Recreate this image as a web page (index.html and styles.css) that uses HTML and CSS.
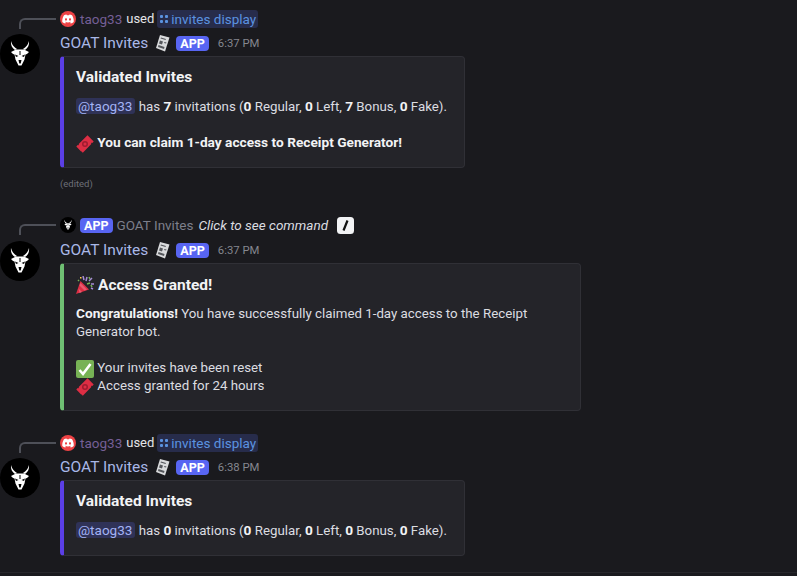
FILE: index.html
```html
<!DOCTYPE html>
<html>
	<head>
		<meta charset="UTF-8">
		<title>GOAT Invites</title>
		<link rel="stylesheet" href="styles.css">
	</head>
	<body>
		<svg class="defs" width="0" height="0">
			<symbol id="goat" viewBox="0 0 40 40">
				<circle cx="20" cy="20" r="20" fill="#000"/>
				<path d="M11 7c-.5 4 1 7 4 9l2-1c-3-2-5-4-6-8zM29 7c.5 4-1 7-4 9l-2-1c3-2 5-4 6-8z" fill="#fff"/>
				<path d="M11 18l5-2.500h8l5 2.500-2 2-1.500.5-1 5-1.500 3-1.500 3h-3l-1.500-3-1.500-3-1-5-1.500-.5z" fill="#fff"/>
				<path d="M15 20.500l3.500 1.500-2.500 1zM25 20.500l-3.500 1.500 2.500 1zM18.500 26h3l-.8 3.500h-1.400zM19.500 17h1v4h-1z" fill="#000"/>
			</symbol>
			<symbol id="receipt" viewBox="0 0 15 18">
				<path d="M5 1l9.500 2.500-4.500 14-9-3.500z" fill="#d9dadc"/>
				<path d="M6 3.500l5 1.500-.5 1-5-1.500zM5 6.500l3 1-1 3-3-1zM9.500 8l2 .5-.5 1-2-.5zM3.500 11l6 2-.5 2-6-2z" fill="#55575c"/>
			</symbol>
			<symbol id="ticket" viewBox="0 0 18 18">
				<path d="M11.500 .3l6.200 6.200-1.400 1.400-1.200-.2.200 1.200-8.500 8.800-1.500-1.500-.2.200L.3 11.500l1.400-1.400 1.200.2-.2-1.200z" fill="#dd2e44"/>
				<circle cx="9" cy="9" r="3" fill="#a01c30"/>
				<circle cx="9" cy="9" r="1.500" fill="#dd2e44"/>
			</symbol>
		</svg>

		<div class="msg msg-first">
			<div class="spine"></div>
			<div class="reply">
				<span class="badge-red">
					<svg width="12" height="10" viewBox="0 0 24 18"><path d="M20 1.500A20 20 0 0 0 15 0l-.7 1.400a18 18 0 0 0-4.600 0L9 0a20 20 0 0 0-5 1.500C1 6 .2 10.500.6 15a20 20 0 0 0 6 3l1.300-2-2-1 .5-.4a14 14 0 0 0 11.200 0l.5.400-2 1 1.300 2a20 20 0 0 0 6-3c.5-5.200-.8-9.600-3.400-13.500zM8 12.300c-1.200 0-2.100-1.100-2.100-2.400S6.800 7.500 8 7.500s2.200 1.100 2.100 2.400c0 1.300-.9 2.400-2.100 2.400zm8 0c-1.200 0-2.100-1.100-2.100-2.400s.9-2.400 2.100-2.400 2.200 1.100 2.100 2.400c0 1.300-.9 2.400-2.100 2.400z" fill="#fff"/></svg>
				</span>
				<span class="user">taog33</span>
				<span class="used">used</span>
				<span class="cmd"><span class="dots"><i></i><i></i><i></i><i></i></span>invites display</span>
			</div>
			<svg class="avatar"><use href="#goat"/></svg>
			<div class="body">
				<div class="head">
					<span class="name">GOAT Invites</span>
					<svg class="receipt"><use href="#receipt"/></svg>
					<span class="app">APP</span>
					<span class="time">6:37 PM</span>
				</div>
				<div class="embed embed-purple">
					<div class="title">Validated Invites</div>
					<p class="line"><span class="mention">@taog33</span> has <b>7</b> invitations (<b>0</b> Regular, <b>0</b> Left, <b>7</b> Bonus, <b>0</b> Fake).</p>
					<p class="line gap"><svg class="emoji"><use href="#ticket"/></svg> <b>You can claim 1-day access to Receipt Generator!</b></p>
				</div>
				<div class="edited">(edited)</div>
			</div>
		</div>

		<div class="msg msg-second">
			<div class="spine"></div>
			<div class="reply">
				<svg class="mini"><use href="#goat"/></svg>
				<span class="app">APP</span>
				<span class="bot">GOAT Invites</span>
				<em class="click">Click to see command</em>
				<span class="slash"><svg width="17" height="17" viewBox="0 0 17 17"><rect width="17" height="17" rx="3.500" fill="#f2f3f5"/><path d="M10.500 3.500L6.500 13.500" stroke="#111" stroke-width="2.200"/></svg></span>
			</div>
			<svg class="avatar"><use href="#goat"/></svg>
			<div class="body">
				<div class="head">
					<span class="name">GOAT Invites</span>
					<svg class="receipt"><use href="#receipt"/></svg>
					<span class="app">APP</span>
					<span class="time">6:37 PM</span>
				</div>
				<div class="embed embed-green">
					<div class="title">
						<svg class="emoji" viewBox="0 0 18 18"><path d="M0 18l4.500-13 8.500 8.500z" fill="#dd2e44"/><path d="M2.500 12.500l3.500 3.500-2.500 1zM4.500 7l6.500 6.500-2.500 1-5-5z" fill="#ea596e"/><path d="M7 0l1 4M11 1l-1 4M16 2l-3 3M18 8h-3M17 13l-2-1" stroke="#a78bd8" stroke-width="1.500"/><path d="M13 1l1 2M11 8l3-1M15 9l1 2M2 4l1 1" stroke="#77b255" stroke-width="1.500"/><path d="M4 1h1.500v1.500H4z" fill="#ffcc4d"/></svg>
						Access Granted!
					</div>
					<p class="line wrap"><b>Congratulations!</b> You have successfully claimed 1-day access to the Receipt Generator bot.</p>
					<p class="line gap"><svg class="emoji" viewBox="0 0 18 18"><rect width="18" height="18" rx="2" fill="#77b255"/><path d="M3.500 10l3.500 4 7.500-10" fill="none" stroke="#fff" stroke-width="2.600"/></svg> Your invites have been reset</p>
					<p class="line"><svg class="emoji"><use href="#ticket"/></svg> Access granted for 24 hours</p>
				</div>
			</div>
		</div>

		<div class="msg msg-third">
			<div class="spine"></div>
			<div class="reply">
				<span class="badge-red">
					<svg width="12" height="10" viewBox="0 0 24 18"><path d="M20 1.500A20 20 0 0 0 15 0l-.7 1.400a18 18 0 0 0-4.600 0L9 0a20 20 0 0 0-5 1.500C1 6 .2 10.500.6 15a20 20 0 0 0 6 3l1.300-2-2-1 .5-.4a14 14 0 0 0 11.200 0l.5.400-2 1 1.300 2a20 20 0 0 0 6-3c.5-5.200-.8-9.600-3.400-13.500zM8 12.300c-1.200 0-2.100-1.100-2.100-2.400S6.800 7.500 8 7.500s2.200 1.100 2.100 2.400c0 1.300-.9 2.400-2.100 2.400zm8 0c-1.200 0-2.100-1.100-2.100-2.400s.9-2.400 2.100-2.400 2.200 1.100 2.100 2.400c0 1.300-.9 2.400-2.100 2.400z" fill="#fff"/></svg>
				</span>
				<span class="user">taog33</span>
				<span class="used">used</span>
				<span class="cmd"><span class="dots"><i></i><i></i><i></i><i></i></span>invites display</span>
			</div>
			<svg class="avatar"><use href="#goat"/></svg>
			<div class="body">
				<div class="head">
					<span class="name">GOAT Invites</span>
					<svg class="receipt"><use href="#receipt"/></svg>
					<span class="app">APP</span>
					<span class="time">6:38 PM</span>
				</div>
				<div class="embed embed-purple">
					<div class="title">Validated Invites</div>
					<p class="line"><span class="mention">@taog33</span> has <b>0</b> invitations (<b>0</b> Regular, <b>0</b> Left, <b>0</b> Bonus, <b>0</b> Fake).</p>
				</div>
			</div>
		</div>

		<div class="bottom"></div>
	</body>
</html>
```

FILE: styles.css
```css
*{margin:0;padding:0;box-sizing:border-box}
html,body{height:576px;overflow:hidden}
body{background:#1a1a1e;color:#dcdde1;font-family:Roboto,"Liberation Sans",sans-serif;font-size:13.300px;line-height:18px;display:flex;flex-direction:column}
.defs{position:absolute}

.msg{display:grid;grid-template-columns:60px 1fr;grid-template-rows:20px auto}
.msg-first{margin-top:9px}
.msg-second{margin-top:24px;grid-template-rows:21px auto}
.msg-third{margin-top:22px}

.spine{margin:9px 4px 0 19px;height:11px;border-left:2px solid #4e5058;border-top:2px solid #4e5058;border-top-left-radius:6px}

.reply{display:flex;align-items:center;gap:4px;height:20px;white-space:nowrap;font-size:13.500px}
.badge-red{width:16px;height:16px;border-radius:50%;background:#ed4245;display:flex;align-items:center;justify-content:center}
.user{color:#755f96}
.used{color:#e4e5e8;font-size:13px}
.cmd{color:#5b93e0;background:#272c4b;border-radius:3px;padding:0 2px;display:flex;align-items:center;gap:3px;height:18px;margin-left:-1px}
.dots{display:grid;grid-template-columns:3px 3px;gap:2px;margin-left:1px}
.dots i{width:3px;height:3px;border-radius:1px;background:#5b93e0}
.mini{width:16px;height:16px}
.bot{color:#7d7f8b}
.click{color:#dcdde1;margin-left:1px}
.slash{display:flex;margin-left:5px}

.avatar{width:40px;height:40px;margin-top:5px}
.body{min-width:0}
.head{display:flex;align-items:center;height:24px;margin-top:2px;white-space:nowrap}
.name{color:#a9b8e8;font-size:15.500px}
.receipt{width:15px;height:18px;margin-left:7px}
.app{background:#5865f2;color:#fff;font-size:12.500px;font-weight:700;border-radius:4px;height:15px;line-height:15px;padding:0 4px;display:inline-block}
.head .app{margin-left:6px}
.time{color:#85878f;font-size:11.300px;margin:1px 0 0 9px}

.embed{background:#242429;border:1px solid #303036;border-left:4px solid;border-radius:4px;padding:11px 15px 15px 12px;margin-top:1px}
.embed-purple{width:405px;border-left-color:#5b3fe6}
.embed-green{width:521px;border-left-color:#6fbf73}
.msg-third .embed{height:76px}
.title{color:#f2f3f5;font-weight:700;font-size:15.500px;line-height:20px;margin-bottom:10px;display:flex;align-items:center;gap:4px}
.embed-purple .title{margin-top:-1px;margin-bottom:11px}
.line{line-height:18px}
.line b{color:#f2f3f5;font-weight:700;font-size:13.700px;line-height:1}
.gap{margin-top:18px}
.mention{color:#a3b3f5;background:#2f3257;border-radius:3px;padding:0 3px 0 2px;font-size:13.500px;line-height:1}
.emoji{width:18px;height:18px;vertical-align:-4px;margin:-2px 0}
.title .emoji{margin:0}
.edited{color:#6d6f78;font-size:9.500px;line-height:14px;margin-top:9px}

.bottom{margin-top:auto;height:4px;border-top:1px solid #26262b}
```
